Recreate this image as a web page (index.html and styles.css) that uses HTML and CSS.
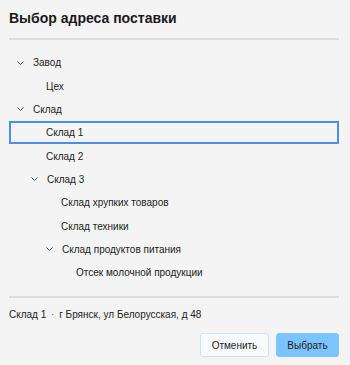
FILE: index.html
```html
<!DOCTYPE html>
<html lang="ru">
<head>
  <meta charset="UTF-8">
  <title>Выбор адреса поставки</title>
  <link rel="stylesheet" href="styles.css">
</head>
<body>
  <div class="dialog">
    <h1 class="title">Выбор адреса поставки</h1>

    <div class="tree">
      <div class="node lvl0"><span class="caret"><svg viewBox="0 0 7 4"><path d="M0.5 0.5 L3.5 3.5 L6.5 0.5"/></svg></span>Завод</div>
      <div class="node lvl1 leaf">Цех</div>
      <div class="node lvl0"><span class="caret"><svg viewBox="0 0 7 4"><path d="M0.5 0.5 L3.5 3.5 L6.5 0.5"/></svg></span>Склад</div>
      <div class="node lvl1 leaf selected">Склад 1</div>
      <div class="node lvl1 leaf">Склад 2</div>
      <div class="node lvl1"><span class="caret"><svg viewBox="0 0 7 4"><path d="M0.5 0.5 L3.5 3.5 L6.5 0.5"/></svg></span>Склад 3</div>
      <div class="node lvl2 leaf">Склад хрупких товаров</div>
      <div class="node lvl2 leaf">Склад техники</div>
      <div class="node lvl2"><span class="caret"><svg viewBox="0 0 7 4"><path d="M0.5 0.5 L3.5 3.5 L6.5 0.5"/></svg></span>Склад продуктов питания</div>
      <div class="node lvl3 leaf">Отсек молочной продукции</div>
    </div>

    <div class="summary">Склад 1 <span class="dot">·</span> г Брянск, ул Белорусская, д 48</div>

    <div class="actions">
      <button class="btn cancel">Отменить</button>
      <button class="btn primary">Выбрать</button>
    </div>
  </div>
</body>
</html>
```

FILE: styles.css
```css
* { margin: 0; padding: 0; box-sizing: border-box; }
body {
  background: #f4f4f4;
  font-family: "Liberation Sans", Arial, sans-serif;
  color: #222;
  width: 350px;
  height: 365px;
}
.dialog {
  padding: 9px 11px 0 9px;
}
.title {
  font-size: 14px;
  font-weight: bold;
  color: #1a1a1a;
  line-height: 18px;
  padding-bottom: 11px;
  border-bottom: 2px solid #dcdcdc;
}
.tree {
  padding: 11px 0 12px;
  border-bottom: 2px solid #dcdcdc;
}
.node {
  display: flex;
  align-items: center;
  height: 23.35px;
  font-size: 10px;
  border: 2px solid transparent;
}
.node.lvl0 { padding-left: 6px; }
.node.lvl1 { padding-left: 20px; }
.node.lvl2 { padding-left: 35px; }
.node.lvl1.leaf { padding-left: 35px; }
.node.lvl2.leaf { padding-left: 50px; }
.node.lvl3.leaf { padding-left: 65px; }
.caret {
  width: 7px;
  height: 4px;
  margin-right: 9px;
  display: inline-flex;
}
.caret svg {
  width: 7px;
  height: 4px;
  fill: none;
  stroke: #444;
  stroke-width: 1;
}
.node.selected {
  border-color: #4a8cf5;
}
.summary {
  font-size: 10px;
  padding-top: 11px;
  height: 35px;
}
.dot {
  margin: 0 2px;
  color: #555;
}
.actions {
  display: flex;
  justify-content: flex-end;
  gap: 7px;
}
.btn {
  font-family: inherit;
  font-size: 10px;
  height: 24px;
  border-radius: 3px;
  cursor: pointer;
  color: #222;
}
.cancel {
  width: 69px;
  background: #f8fbfd;
  border: 1px solid #c9e3f7;
}
.primary {
  width: 63px;
  background: #7cc4ff;
  border: 1px solid #7cc4ff;
}
```
